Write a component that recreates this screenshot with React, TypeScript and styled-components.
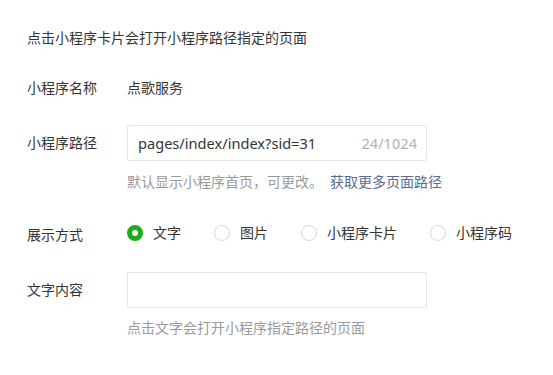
import React from 'react';
import styled, {createGlobalStyle} from 'styled-components';

const GlobalStyle = createGlobalStyle`
    html, body {
        margin: 0;
        padding: 0;
        background: #fff;
    }
    body {
        font-family: "Noto Sans", "Noto Sans CJK SC", sans-serif;
        font-size: 14px;
        color: #353535;
    }
`;

const Page = styled.div`
    width: 553px;
    height: 375px;
    box-sizing: border-box;
    padding: 28px 0 0 27px;
    display: flex;
    flex-direction: column;
`;

const Intro = styled.div`
    line-height: 20px;
    margin-bottom: 30px;
`;

const Row = styled.div<{$gap?: number; $align?: string}>`
    display: flex;
    align-items: ${(p) => p.$align || 'center'};
    margin-bottom: ${(p) => p.$gap || 0}px;
`;

const Label = styled.div<{$offset?: number}>`
    width: 100px;
    flex-shrink: 0;
    line-height: 20px;
    margin-top: ${(p) => p.$offset || 0}px;
`;

const Value = styled.div`
    line-height: 20px;
`;

const InputBox = styled.div`
    width: 300px;
    height: 36px;
    box-sizing: border-box;
    border: 1px solid #e4e4e4;
    border-radius: 2px;
    display: flex;
    align-items: center;
    padding: 0 9px 0 10px;
`;

const InputText = styled.span`
    flex: 1;
    font-size: 14.6px;
    color: #353535;
`;

const Counter = styled.span`
    color: #b2b2b2;
    font-size: 14.6px;
`;

const Help = styled.div<{$gap?: number}>`
    margin-left: 100px;
    line-height: 20px;
    color: #9a9a9a;
    margin-bottom: ${(p) => p.$gap || 0}px;
`;

const Link = styled.a`
    color: #576b95;
    text-decoration: none;
    margin-left: 7px;
`;

const RadioGroup = styled.div`
    display: flex;
    align-items: center;
`;

const RadioItem = styled.label`
    display: flex;
    align-items: center;
    margin-right: 33px;
    line-height: 20px;
`;

const Circle = styled.span<{$checked?: boolean}>`
    width: 16px;
    height: 16px;
    box-sizing: border-box;
    border-radius: 50%;
    margin-right: 10px;
    border: ${(p) => (p.$checked ? '5px solid #1aad19' : '1px solid #d6d6d6')};
    background: #fff;
`;

const options = ['文字', '图片', '小程序卡片', '小程序码'];

export default function App() {
    return (
        <Page>
            <GlobalStyle/>
            <Intro>{'点击小程序卡片会打开小程序路径指定的页面'}</Intro>
            <Row $gap={27}>
                <Label>{'小程序名称'}</Label>
                <Value>{'点歌服务'}</Value>
            </Row>
            <Row $gap={11}>
                <Label>{'小程序路径'}</Label>
                <InputBox>
                    <InputText>{'pages/index/index?sid=31'}</InputText>
                    <Counter>{'24/1024'}</Counter>
                </InputBox>
            </Row>
            <Help $gap={31}>
                {'默认显示小程序首页，可更改。'}
                <Link href='#'>{'获取更多页面路径'}</Link>
            </Help>
            <Row
                $gap={27}
                $align='flex-start'
            >
                <Label $offset={2}>{'展示方式'}</Label>
                <RadioGroup>
                    {options.map((o, i) => (
                        <RadioItem key={o}>
                            <Circle $checked={i === 0}/>
                            {o}
                        </RadioItem>
                    ))}
                </RadioGroup>
            </Row>
            <Row $gap={10}>
                <Label>{'文字内容'}</Label>
                <InputBox/>
            </Row>
            <Help>{'点击文字会打开小程序指定路径的页面'}</Help>
        </Page>
    );
}
